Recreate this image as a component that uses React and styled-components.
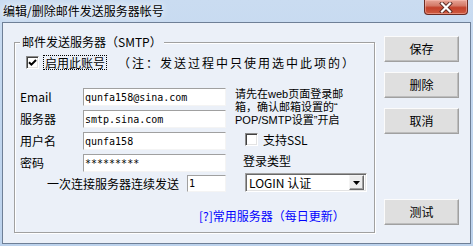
import React from 'react'
import styled, { createGlobalStyle } from 'styled-components'

const GlobalStyle = createGlobalStyle`
    html, body {
        margin: 0;
        padding: 0;
    }
    body {
        width: 473px;
        height: 246px;
        overflow: hidden;
        font-family: "Noto Sans CJK SC", "Noto Sans", sans-serif;
        font-size: 12px;
        color: #000;
        background: #c6daf0;
    }
`

const Window = styled.div`
    width: 473px;
    height: 246px;
    box-sizing: border-box;
    display: flex;
    flex-direction: column;
    padding: 0 2px 2px 2px;
    background: linear-gradient(180deg, #cadcf1 0%, #c2d7ef 40%, #bcd2ec 100%);
`

const TitleBar = styled.div`
    height: 22px;
    display: flex;
    align-items: flex-start;
    padding-left: 1px;
`

const TitleText = styled.div`
    line-height: 22px;
    font-size: 12px;
    text-shadow: 0 0 6px rgba(255, 255, 255, 0.95), 0 0 10px rgba(255, 255, 255, 0.8);
`

const CloseButton = styled.div`
    margin-left: auto;
    margin-right: 3px;
    width: 44px;
    height: 15px;
    box-sizing: border-box;
    border: 1px solid #6b2b22;
    border-top: 0;
    border-radius: 0 0 4px 4px;
    background: linear-gradient(180deg, #e7a597 0%, #d47a68 40%, #c3412b 55%, #cf5b40 100%);
    box-shadow: inset 0 0 0 1px rgba(255, 200, 190, 0.45);
    display: flex;
    align-items: center;
    justify-content: center;
`

const Client = styled.div`
    flex: 1;
    display: flex;
    border: 1px solid #6e7f96;
    background: #ebf0f8;
    padding: 12px 0 0 11px;
`

const GroupBox = styled.fieldset`
    box-sizing: border-box;
    width: 361px;
    height: 198px;
    margin: 0;
    padding: 0;
    min-width: 0;
    border: 1px solid #a0a0a0;
    box-shadow: 1px 1px 0 #fff, inset 1px 1px 0 #fff;
`

const GroupTitle = styled.legend`
    margin-left: 5px;
    padding: 0 2px;
    line-height: 14px;
    font-size: 12px;
    background: #ebf0f8;
`

const CheckRow = styled.div`
    margin-top: 6px;
    height: 15px;
    padding-left: 11px;
    display: flex;
    align-items: center;
`

const Box = styled.span`
    width: 13px;
    height: 13px;
    box-sizing: border-box;
    flex: none;
    background: #fff;
    border: 1px solid;
    border-color: #8a8a8a #fff #fff #8a8a8a;
    box-shadow: inset 1px 1px 0 #404040, inset -1px -1px 0 #e3e3e3;
    display: flex;
    align-items: center;
    justify-content: center;
`

const FocusLabel = styled.span`
    margin-left: 4px;
    padding: 0 1px;
    border: 1px dotted #000;
    line-height: 13px;
`

const Note = styled.span`
    margin-left: 11px;
    line-height: 15px;
    letter-spacing: 2px;
    white-space: nowrap;
`

const Form = styled.div`
    display: flex;
    margin-top: 18px;
    padding-left: 5px;
`

const LeftCol = styled.div`
    width: 206px;
    display: flex;
    flex-direction: column;
    gap: 4px;
`

const FieldRow = styled.div`
    display: flex;
    align-items: center;
    height: ${({ h }) => h || 18}px;
    justify-content: ${({ end }) => (end ? 'flex-end' : 'flex-start')};
    gap: ${({ end }) => (end ? 8 : 0)}px;
    margin-top: ${({ mt }) => mt || 0}px;
`

const Label = styled.span`
    width: ${({ w }) => (w ? `${w}px` : 'auto')};
    line-height: 14px;
    white-space: nowrap;
`

const Input = styled.input`
    box-sizing: border-box;
    width: ${({ w }) => w}px;
    height: ${({ h }) => h || 18}px;
    margin: 0;
    padding: 0 1px;
    border: 1px solid;
    border-color: #a0a0a0 #f4f4f4 #f4f4f4 #a0a0a0;
    background: #fff;
    font-family: "DejaVu Sans Mono", "Liberation Mono", monospace;
    font-size: 10px;
    color: #000;
    outline: none;
`

const RightCol = styled.div`
    margin-left: 9px;
    display: flex;
    flex-direction: column;
    align-items: flex-start;
`

const Hint = styled.div`
    font-family: "Liberation Sans", "Noto Sans CJK SC", sans-serif;
    font-size: 11px;
    line-height: 13px;
    white-space: nowrap;
`

const SslRow = styled.div`
    margin-top: 6px;
    margin-left: 10px;
    height: 13px;
    display: flex;
    align-items: center;
    gap: 5px;
    line-height: 13px;
`

const TypeLabel = styled.div`
    margin-top: 8px;
    margin-left: 8px;
    line-height: 14px;
`

const Combo = styled.div`
    margin-top: 5px;
    margin-left: 10px;
    width: 122px;
    height: 19px;
    box-sizing: border-box;
    background: #fff;
    border: 1px solid;
    border-color: #a0a0a0 #fff #fff #a0a0a0;
    box-shadow: inset 1px 1px 0 #696969, inset -1px -1px 0 #e3e3e3;
    display: flex;
    align-items: center;
    padding: 2px 2px 2px 3px;
`

const ComboText = styled.span`
    flex: 1;
    line-height: 14px;
    white-space: nowrap;
`

const ComboArrow = styled.span`
    width: 15px;
    height: 15px;
    box-sizing: border-box;
    background: #ececec;
    border: 1px solid;
    border-color: #f4f4f4 #696969 #696969 #f4f4f4;
    box-shadow: inset -1px -1px 0 #a0a0a0;
    display: flex;
    align-items: center;
    justify-content: center;
`

const HelpLink = styled.div`
    margin-top: 17px;
    padding-left: 184px;
    line-height: 14px;
    color: #0000ff;
    white-space: nowrap;
`

const ButtonCol = styled.div`
    margin-left: 9px;
    padding: 1px 0 18px;
    display: flex;
    flex-direction: column;
    gap: 10px;
`

const Button = styled.div`
    width: 75px;
    height: 26px;
    box-sizing: border-box;
    margin-top: ${({ last }) => (last ? 'auto' : '0')};
    background: #dfdfdf;
    border: 1px solid;
    border-color: #fbfbfb #a0a0a0 #a0a0a0 #fbfbfb;
    box-shadow: inset -1px -1px 0 #bdbdbd;
    display: flex;
    align-items: center;
    justify-content: center;
    line-height: 14px;
`

const CheckMark = () => (
    <svg width="9" height="9" viewBox="0 0 9 9">
        <path d="M1 4.2 L3.4 6.6 L8 2" fill="none" stroke="#000" strokeWidth="2" />
    </svg>
)

const fields = [
    { label: 'Email', value: 'qunfa158@sina.com' },
    { label: '服务器', value: 'smtp.sina.com' },
    { label: '用户名', value: 'qunfa158' },
    { label: '密码', value: '*********' },
]

const App = () => {
    return (
        <>
            <GlobalStyle />
            <Window>
                <TitleBar>
                    <TitleText>编辑/删除邮件发送服务器帐号</TitleText>
                    <CloseButton>
                        <svg width="14" height="11" viewBox="0 0 14 11">
                            <path d="M3 1.5 L11 9.5 M11 1.5 L3 9.5" stroke="#5a2a24" strokeWidth="4" strokeLinecap="square" />
                            <path d="M3 1.5 L11 9.5 M11 1.5 L3 9.5" stroke="#fff" strokeWidth="2.2" strokeLinecap="square" />
                        </svg>
                    </CloseButton>
                </TitleBar>

                <Client>
                    <GroupBox>
                        <GroupTitle>邮件发送服务器（SMTP）</GroupTitle>

                        <CheckRow>
                            <Box>
                                <CheckMark />
                            </Box>
                            <FocusLabel>启用此账号</FocusLabel>
                            <Note>（注：发送过程中只使用选中此项的）</Note>
                        </CheckRow>

                        <Form>
                            <LeftCol>
                                {fields.map((item, idx) => (
                                    <FieldRow key={idx}>
                                        <Label w={63}>{item.label}</Label>
                                        <Input w={143} readOnly value={item.value} />
                                    </FieldRow>
                                ))}
                                <FieldRow end h={17} mt={-1}>
                                    <Label>一次连接服务器连续发送</Label>
                                    <Input w={39} h={17} readOnly value="1" />
                                </FieldRow>
                            </LeftCol>

                            <RightCol>
                                <Hint>
                                    请先在web页面登录邮
                                    <br />
                                    箱，确认邮箱设置的“
                                    <br />
                                    POP/SMTP设置”开启
                                </Hint>
                                <SslRow>
                                    <Box />
                                    <span>支持SSL</span>
                                </SslRow>
                                <TypeLabel>登录类型</TypeLabel>
                                <Combo>
                                    <ComboText>LOGIN 认证</ComboText>
                                    <ComboArrow>
                                        <svg width="7" height="4" viewBox="0 0 7 4">
                                            <path d="M0 0 H7 L3.5 4 Z" fill="#000" />
                                        </svg>
                                    </ComboArrow>
                                </Combo>
                            </RightCol>
                        </Form>

                        <HelpLink>[?]常用服务器（每日更新）</HelpLink>
                    </GroupBox>

                    <ButtonCol>
                        <Button>保存</Button>
                        <Button>删除</Button>
                        <Button>取消</Button>
                        <Button last>测试</Button>
                    </ButtonCol>
                </Client>
            </Window>
        </>
    )
}

export default App
